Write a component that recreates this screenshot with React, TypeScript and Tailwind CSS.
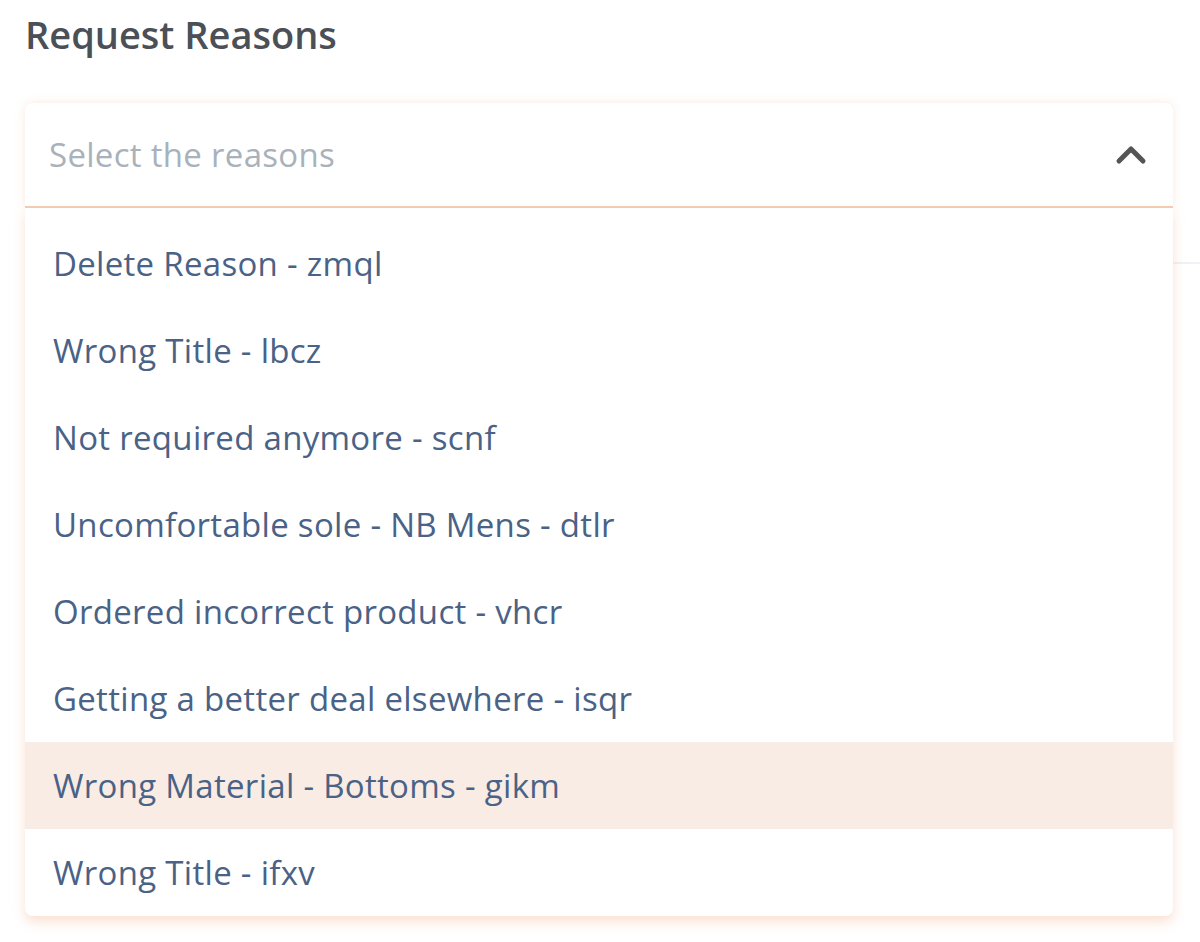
import { ChevronUp } from 'lucide-react'

const reasons = [
  'Delete Reason - zmql',
  'Wrong Title - lbcz',
  'Not required anymore - scnf',
  'Uncomfortable sole - NB Mens - dtlr',
  'Ordered incorrect product - vhcr',
  'Getting a better deal elsewhere - isqr',
  'Wrong Material - Bottoms - gikm',
  'Wrong Title - ifxv',
]

export default function App() {
  return (
    <main className="min-h-[942px] bg-white font-['Open_Sans',sans-serif]">
      <div className="relative px-[25px] pt-[11px]">
        <h1 className="text-[38px] font-semibold leading-[46px] text-[#4b4f56]">Request Reasons</h1>
        <div className="absolute right-0 top-[262px] h-[2px] w-[40px] bg-[#eef1f5]" />
        <div className="relative mt-[46px] w-[1148px]">
          <div className="flex h-[105px] items-center justify-between rounded-t-[8px] border-b-2 border-[#f3cdb5] bg-white pl-[24px] pr-[18px] shadow-[0_0_10px_rgba(240,170,130,0.25)]">
            <span className="text-[33px] tracking-[0.3px] text-[#a9b1ba]">Select the reasons</span>
            <ChevronUp className="h-[48px] w-[48px] text-[#555]" strokeWidth={2.5} />
          </div>
          <ul className="rounded-b-[8px] bg-white pt-[12px] shadow-[0_6px_12px_rgba(240,170,130,0.35)]">
            {reasons.map((r, i) => (
              <li
                key={r}
                className={
                  'flex h-[87px] items-center px-[28px] text-[33px] tracking-[0.3px] text-[#4a6285] ' +
                  (i === 6 ? 'bg-[#f9ece5]' : '') +
                  (i === 7 ? ' rounded-b-[8px]' : '')
                }
              >
                {r}
              </li>
            ))}
          </ul>
        </div>
      </div>
    </main>
  )
}
